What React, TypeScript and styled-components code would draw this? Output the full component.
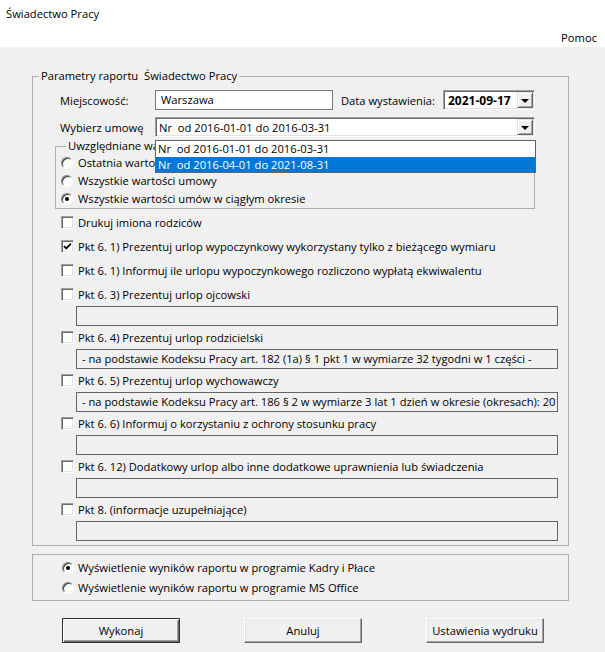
import React from "react"
import styled, { createGlobalStyle } from "styled-components"

const GlobalStyle = createGlobalStyle`
    html, body {
        margin: 0;
        padding: 0;
    }
    body {
        background: #f0f0f0;
        font-family: "Open Sans", "Noto Sans", Arial, sans-serif;
        font-size: 11.2px;
        color: #000;
    }
`;

type Option = {
    label: string;
    checked?: boolean;
    field?: boolean;
    value?: string;
}

const options: Option[] = [
    { label: 'Drukuj imiona rodziców' },
    { label: 'Pkt 6. 1) Prezentuj urlop wypoczynkowy wykorzystany tylko z bieżącego wymiaru', checked: true },
    { label: 'Pkt 6. 1) Informuj ile urlopu wypoczynkowego rozliczono wypłatą ekwiwalentu' },
    { label: 'Pkt 6. 3) Prezentuj urlop ojcowski', field: true },
    {
        label: 'Pkt 6. 4) Prezentuj urlop rodzicielski',
        field: true,
        value: '- na podstawie Kodeksu Pracy art. 182 (1a) § 1 pkt 1 w wymiarze 32 tygodni w 1 części -',
    },
    {
        label: 'Pkt 6. 5) Prezentuj urlop wychowawczy',
        field: true,
        value: '- na podstawie Kodeksu Pracy art. 186 § 2 w wymiarze 3 lat 1 dzień w okresie (okresach): 2016-04-01 - 2021-08-31',
    },
    { label: 'Pkt 6. 6) Informuj o korzystaniu z ochrony stosunku pracy', field: true },
    { label: 'Pkt 6. 12) Dodatkowy urlop albo inne dodatkowe uprawnienia lub świadczenia', field: true },
    { label: 'Pkt 8. (informacje uzupełniające)', field: true },
];

const contracts = [
    'Nr  od 2016-01-01 do 2016-03-31',
    'Nr  od 2016-04-01 do 2021-08-31',
];

const Radio = ({ checked, label }: { checked?: boolean; label: string }) => (
    <RadioRow>
        <RadioCircle $checked={checked} />
        <span>{label}</span>
    </RadioRow>
)

const Check = ({ checked, label }: { checked?: boolean; label: string }) => (
    <CheckRow>
        <CheckBox>
            {checked && (
                <svg width="11" height="11" viewBox="0 0 11 11">
                    <polyline points="2,5 4.2,7.4 9,2.6" fill="none" stroke="#000" strokeWidth="1.7" />
                </svg>
            )}
        </CheckBox>
        <span>{label}</span>
    </CheckRow>
)

export default function App() {
    return (
        <Window>
            <GlobalStyle />
            <TopBar>
                <Title>Świadectwo Pracy</Title>
                <Menu>Pomoc</Menu>
            </TopBar>

            <Body>
                <GroupBox>
                    <Legend>Parametry raportu  Świadectwo Pracy</Legend>
                    <GroupContent>
                        <FormRow>
                            <FieldLabel>Miejscowość:</FieldLabel>
                            <TextInput>Warszawa</TextInput>
                            <DateLabel>Data wystawienia:</DateLabel>
                            <Combo $width={92}>
                                <ComboValue $bold>2021-09-17</ComboValue>
                                <DropButton><Arrow /></DropButton>
                            </Combo>
                        </FormRow>
                        <FormRow $gap={7}>
                            <FieldLabel>Wybierz umowę</FieldLabel>
                            <ComboWrap>
                                <Combo $width={380}>
                                    <ComboValue>{contracts[0]}</ComboValue>
                                    <DropButton><Arrow /></DropButton>
                                </Combo>
                                <DropList>
                                    {contracts.map((c, i) => (
                                        <DropItem key={c} $selected={i === 1}>{c}</DropItem>
                                    ))}
                                </DropList>
                            </ComboWrap>
                        </FormRow>

                        <SubGroup>
                            <SubLegend>Uwzględniane wartości</SubLegend>
                            <RadioList>
                                <Radio label="Ostatnia wartość umowy" />
                                <Radio label="Wszystkie wartości umowy" />
                                <Radio label="Wszystkie wartości umów w ciągłym okresie" checked />
                            </RadioList>
                        </SubGroup>

                        <OptionList>
                            {options.map(o => (
                                <OptionItem key={o.label}>
                                    <Check label={o.label} checked={o.checked} />
                                    {o.field && <TextField>{o.value}</TextField>}
                                </OptionItem>
                            ))}
                        </OptionList>
                    </GroupContent>
                </GroupBox>

                <OutputBox>
                    <OutputList>
                        <Radio label="Wyświetlenie wyników raportu w programie Kadry i Płace" checked />
                        <Radio label="Wyświetlenie wyników raportu w programie MS Office" />
                    </OutputList>
                </OutputBox>

                <ButtonBar>
                    <Button $default>Wykonaj</Button>
                    <Button>Anuluj</Button>
                    <Button>Ustawienia wydruku</Button>
                </ButtonBar>
            </Body>
        </Window>
    )
}

const Window = styled.div`
    width: 605px;
    height: 652px;
    overflow: hidden;
    background: #f0f0f0;
`;

const TopBar = styled.div`
    background: #fff;
    height: 47px;
    display: flex;
    flex-direction: column;
`;

const Title = styled.div`
    padding: 6px 0 0 6px;
    line-height: 16px;
`;

const Menu = styled.div`
    margin-top: 8px;
    padding-right: 8px;
    line-height: 16px;
    text-align: right;
`;

const Body = styled.div`
    padding: 21px 36px 0 32px;
`;

const GroupBox = styled.fieldset`
    margin: 0;
    padding: 0;
    border: 1px solid #adadad;
    min-width: 0;
`;

const Legend = styled.legend`
    margin-left: 6px;
    padding: 0 2px;
    line-height: 16px;
    white-space: pre;
`;

const GroupContent = styled.div`
    display: flex;
    flex-direction: column;
    padding: 6px 10px 4px 27px;
`;

const FormRow = styled.div<{ $gap?: number }>`
    display: flex;
    align-items: center;
    height: 20px;
    margin-top: ${p => p.$gap ?? 0}px;
`;

const FieldLabel = styled.span`
    width: 95px;
    flex-shrink: 0;
`;

const DateLabel = styled.span`
    width: 102px;
    margin-left: 8px;
    flex-shrink: 0;
`;

const sunken = `
    background: #fff;
    border: 1px solid;
    border-color: #a0a0a0 #fff #fff #a0a0a0;
    box-shadow: inset 1px 1px #696969, inset -1px -1px #e3e3e3;
`;

const TextInput = styled.div`
    width: 178px;
    height: 20px;
    box-sizing: border-box;
    border: 1px solid #7a7a7a;
    background: #fff;
    padding-left: 5px;
    line-height: 18px;
`;

const ComboWrap = styled.div`
    position: relative;
`;

const Combo = styled.div<{ $width: number }>`
    ${sunken};
    width: ${p => p.$width}px;
    height: 20px;
    box-sizing: border-box;
    display: flex;
    align-items: center;
    padding: 1px;
`;

const ComboValue = styled.span<{ $bold?: boolean }>`
    flex: 1;
    padding-left: ${p => p.$bold ? 3 : 2}px;
    white-space: pre;
    font-weight: ${p => p.$bold ? 700 : 400};
    font-size: ${p => p.$bold ? 12 : 11.2}px;
`;

const DropButton = styled.div`
    width: 16px;
    height: 16px;
    box-sizing: border-box;
    background: #f0f0f0;
    border: 1px solid;
    border-color: #e3e3e3 #696969 #696969 #e3e3e3;
    box-shadow: inset 1px 1px #fff, inset -1px -1px #a0a0a0;
    display: flex;
    align-items: center;
    justify-content: center;
`;

const Arrow = styled.span`
    width: 0;
    height: 0;
    border-left: 4px solid transparent;
    border-right: 4px solid transparent;
    border-top: 4px solid #000;
    margin-top: 1px;
`;

const DropList = styled.div`
    position: absolute;
    top: 23px;
    left: 0;
    width: 381px;
    box-sizing: border-box;
    border: 1px solid #646464;
    background: #fff;
    z-index: 2;
`;

const DropItem = styled.div<{ $selected?: boolean }>`
    height: 15.5px;
    line-height: 15px;
    padding-left: 2px;
    white-space: pre;
    background: ${p => p.$selected ? '#0078d7' : '#fff'};
    color: ${p => p.$selected ? '#fff' : '#000'};
`;

const SubGroup = styled.fieldset`
    margin: 1px 0 0 -5px;
    padding: 0 0 1px 5px;
    width: 480px;
    box-sizing: border-box;
    min-width: 0;
    border: 1px solid #adadad;
`;

const SubLegend = styled.legend`
    margin-left: 5px;
    padding: 0 2px;
    line-height: 16px;
`;

const RadioList = styled.div`
    display: flex;
    flex-direction: column;
    gap: 1px;
`;

const RadioRow = styled.div`
    display: flex;
    align-items: center;
    gap: 5px;
    height: 17px;
`;

const RadioCircle = styled.span<{ $checked?: boolean }>`
    width: 12px;
    height: 12px;
    box-sizing: border-box;
    border-radius: 50%;
    border: 1px solid;
    border-color: #808080 #fff #fff #808080;
    box-shadow: inset 1px 1px #404040;
    background: #fff;
    display: flex;
    align-items: center;
    justify-content: center;
    flex-shrink: 0;

    &::after {
        content: "";
        width: 4px;
        height: 4px;
        border-radius: 50%;
        background: #000;
        display: ${p => p.$checked ? 'block' : 'none'};
    }
`;

const OptionList = styled.div`
    display: flex;
    flex-direction: column;
    margin-top: 5px;
    gap: 8px;
`;

const OptionItem = styled.div`
    display: flex;
    flex-direction: column;

    &:has(> :nth-child(2)) + & {
        margin-top: -5px;
    }
`;

const CheckRow = styled.div`
    display: flex;
    align-items: center;
    gap: 4px;
    height: 16px;
    padding-left: 1px;
`;

const CheckBox = styled.span`
    ${sunken};
    width: 13px;
    height: 13px;
    box-sizing: border-box;
    display: flex;
    align-items: center;
    justify-content: center;
    flex-shrink: 0;
`;

const TextField = styled.div`
    margin: 4px 0 0 16px;
    height: 20px;
    box-sizing: border-box;
    border: 1px solid #646464;
    padding-left: 5px;
    line-height: 18px;
    white-space: nowrap;
    overflow: hidden;
`;

const OutputBox = styled.fieldset`
    margin: 8px 0 0;
    padding: 4px 0 4px 29px;
    min-width: 0;
    border: 1px solid #adadad;
`;

const OutputList = styled.div`
    display: flex;
    flex-direction: column;
    gap: 3px;

    & > div {
        gap: 4px;
    }
`;

const ButtonBar = styled.div`
    display: flex;
    gap: 64px;
    padding: 17px 0 0 30px;
`;

const Button = styled.div<{ $default?: boolean }>`
    width: 118px;
    height: 25px;
    box-sizing: border-box;
    display: flex;
    align-items: center;
    justify-content: center;
    background: #f0f0f0;
    border: 1px solid;
    border-color: ${p => p.$default ? '#333' : '#fff #696969 #696969 #fff'};
    box-shadow: ${p => p.$default
        ? 'inset 1px 1px #fff, inset -1px -1px #696969, inset -2px -2px #a0a0a0'
        : 'inset -1px -1px #a0a0a0, inset 1px 1px #e3e3e3'};
`;
